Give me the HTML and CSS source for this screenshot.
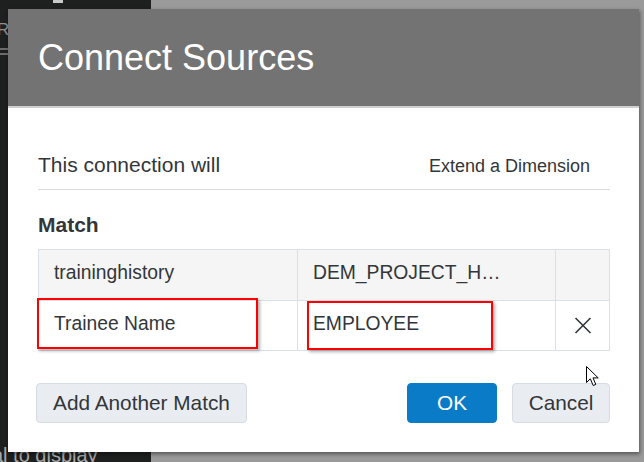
FILE: index.html
```html
<!DOCTYPE html>
<html lang="en">
<head>
<meta charset="utf-8">
<title>Connect Sources</title>
<link rel="stylesheet" href="styles.css">
</head>
<body>
<div class="app">
  <aside class="side">
    <div class="side-top"><span class="side-tab"></span></div>
    <div class="side-label">RA</div>
    <div class="side-lines"></div>
    <div class="side-spacer"></div>
    <div class="side-hint">al to display</div>
  </aside>
  <main class="canvas"></main>
</div>

<div class="dialog" role="dialog">
  <header class="dlg-head"><h1 class="dlg-title">Connect Sources</h1></header>
  <section class="dlg-body">
    <div class="conn-row">
      <span class="conn-label">This connection will</span>
      <span class="conn-value">Extend a Dimension</span>
    </div>
    <h2 class="match-title">Match</h2>
    <div class="match-wrap">
      <div class="match-grid">
        <div class="cell head">traininghistory</div>
        <div class="cell head">DEM_PROJECT_H…</div>
        <div class="cell head"></div>
        <div class="cell">Trainee Name</div>
        <div class="cell">EMPLOYEE</div>
        <div class="cell icon-cell">
          <svg class="x-icon" width="18" height="17" viewBox="0 0 18 17"><path d="M1.5 1 L16.5 16 M16.5 1 L1.5 16" stroke="#32363a" stroke-width="1.6" fill="none"/></svg>
        </div>
      </div>
      <div class="hl hl-a"></div>
      <div class="hl hl-b"></div>
    </div>
    <div class="actions">
      <button class="btn btn-add">Add Another Match</button>
      <div class="actions-right">
        <button class="btn btn-primary">OK</button>
        <button class="btn btn-cancel">Cancel</button>
      </div>
    </div>
  </section>
</div>

<svg class="cursor" width="14" height="21" viewBox="0 0 14 21"><path d="M0.5 0.5 L0.5 16.5 L4.3 12.8 L7.2 19.5 L9.8 18.4 L7 11.9 L12.2 11.9 Z" fill="#fff" stroke="#000" stroke-width="1" stroke-linejoin="round"/></svg>
</body>
</html>
```

FILE: styles.css
```css
* { box-sizing: border-box; }

html, body {
  margin: 0;
  padding: 0;
}

body {
  width: 644px;
  height: 462px;
  overflow: hidden;
  position: relative;
  font-family: "Liberation Sans", Arial, sans-serif;
  color: #32363a;
  background: #9a9a9a;
}

.app {
  display: flex;
  height: 462px;
}

.side {
  width: 151px;
  flex-shrink: 0;
  background: #1e2020;
  display: flex;
  flex-direction: column;
  overflow: hidden;
  color: #a5a5a5;
}

.side-top {
  height: 22px;
  padding-left: 53px;
}

.side-tab {
  display: block;
  width: 10px;
  height: 3px;
  background: #c9c9c9;
}

.side-label {
  font-size: 17px;
  line-height: 16px;
  margin-left: -3px;
  color: #8f8f8f;
}

.side-lines {
  margin-top: 10px;
  width: 24px;
  height: 7px;
  border-top: 2px solid #6c6c6c;
  border-bottom: 2px solid #6c6c6c;
}

.side-spacer { flex: 1; }

.side-hint {
  flex-shrink: 0;
  height: 17px;
  font-size: 20px;
  line-height: 20px;
  margin-left: -8px;
  white-space: nowrap;
  color: #a9a9a9;
}

.canvas {
  flex: 1;
  background: #9a9a9a;
}

/* Dialog */
.dialog {
  position: absolute;
  left: 8px;
  top: 9px;
  width: 631px;
  height: 443px;
  background: #fff;
  box-shadow: 1px 2px 4px rgba(0, 0, 0, 0.45);
}

.dlg-head {
  height: 99px;
  background: #737373;
  border-bottom: 2px solid #d0d0d0;
  display: flex;
  align-items: center;
  padding: 0 30px;
}

.dlg-title {
  margin: 0;
  font-size: 36px;
  font-weight: normal;
  color: #fff;
  line-height: 40px;
}

.dlg-body {
  padding: 0 29px 0 30px;
}

.conn-row {
  display: flex;
  justify-content: space-between;
  align-items: baseline;
  padding-top: 45px;
  padding-bottom: 11px;
  border-bottom: 1px solid #d9d9d9;
  line-height: 24px;
}

.conn-label {
  font-size: 21px;
}

.conn-value {
  font-size: 18px;
  padding-right: 20px;
}

.match-title {
  margin: 23px 0 12px;
  font-size: 21px;
  line-height: 24px;
  font-weight: bold;
}

.match-wrap {
  position: relative;
}

.match-grid {
  display: grid;
  grid-template-columns: 259px 258px 54px;
  grid-template-rows: 51px 50px;
  border-top: 1px solid #d9e0e7;
  border-left: 1px solid #d9e0e7;
  width: 572px;
}

.cell {
  border-right: 1px solid #d9e0e7;
  border-bottom: 1px solid #d9e0e7;
  display: flex;
  align-items: center;
  padding: 0 15px 4px;
  font-size: 19.3px;
  white-space: nowrap;
  overflow: hidden;
  background: #fff;
}

.cell.head {
  background: #f5f5f5;
}

.icon-cell {
  justify-content: center;
  padding: 0;
}

.x-icon { display: block; }

.hl {
  position: absolute;
  border: 2px solid #f00;
  box-shadow: 2px 2px 3px rgba(0, 0, 0, 0.3);
  pointer-events: none;
}

.hl-a {
  left: -1px;
  top: 49px;
  width: 221px;
  height: 51px;
}

.hl-b {
  left: 269px;
  top: 52px;
  width: 186px;
  height: 49px;
}

.actions {
  margin-top: 32px;
  display: flex;
  justify-content: space-between;
  align-items: center;
  margin-left: -2px;
}

.actions-right {
  display: flex;
  gap: 15px;
}

.btn {
  height: 40px;
  border: 1px solid #d5dce3;
  border-radius: 4px;
  background: #e9edf1;
  color: #32363a;
  font-family: "Liberation Sans", Arial, sans-serif;
  font-size: 20.8px;
  padding: 0;
  margin: 0;
}

.btn-add { width: 211px; }
.btn-cancel { width: 98px; }

.btn-primary {
  width: 90px;
  background: #0a7bc7;
  border-color: #0a7bc7;
  color: #fff;
}

.cursor {
  position: absolute;
  left: 586px;
  top: 366px;
}
```
